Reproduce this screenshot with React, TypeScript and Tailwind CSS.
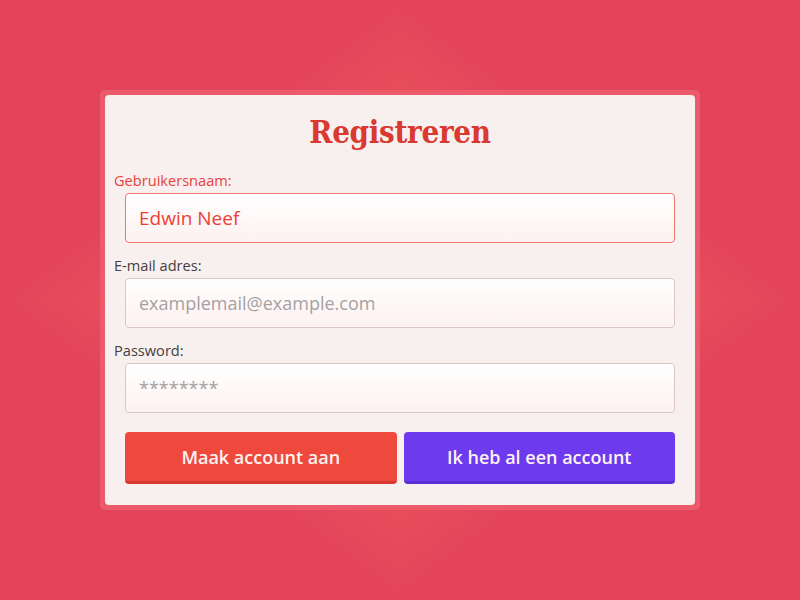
import React from "react";

const sans = "font-['Open_Sans','Noto_Sans',sans-serif]";

function Field({
  label,
  value,
  active,
  placeholder,
}: {
  label: string;
  value?: string;
  active?: boolean;
  placeholder: string;
}) {
  return (
    <div className="flex flex-col">
      <label
        className={`h-5 pl-[9px] text-[14.6px] leading-5 ${sans} ${
          active ? "text-[#ec3f37]" : "text-[#444040]"
        }`}
      >
        {label}
      </label>
      <div className="mt-[3px] px-5">
        <input
          readOnly
          value={value ?? ""}
          placeholder={placeholder}
          className={`h-[50px] w-full rounded-[4px] border bg-[linear-gradient(to_bottom,#ffffff,#fdf1f1)] px-[13px] text-[18px] outline-none placeholder:text-[#a5a1a1] ${sans} ${
            active ? "border-[#ef776f] text-[19px] text-[#ec3f37]" : "border-[#dac6c6] text-[#444]"
          }`}
        />
      </div>
    </div>
  );
}

export default function App() {
  return (
    <div className="flex h-[600px] w-[800px] items-center justify-center bg-[#e3435b] bg-[linear-gradient(to_bottom_right,#e3435b_48%,#f0625a),linear-gradient(to_bottom_left,#e3435b_48%,#f0625a),linear-gradient(to_top_right,#e3435b_48%,#f0625a),linear-gradient(to_top_left,#e3435b_48%,#f0625a)] bg-size-[50%_50%] bg-position-[0_0,100%_0,0_100%,100%_100%] bg-no-repeat">
      <div className="h-[420px] w-[600px] rounded-[5px] bg-[#ec5b6c] p-[5px]">
        <div className="flex h-full w-full flex-col rounded-[4px] bg-[#f8efef]">
          <h1 className="mt-[17px] h-10 text-center font-['DejaVu_Serif',serif] text-[31px] font-bold leading-10 tracking-[-0.3px] text-[#d9392f] [font-stretch:condensed]">
            Registreren
          </h1>
          <div className="mt-[18px] flex flex-col gap-3">
            <Field label="Gebruikersnaam:" value="Edwin Neef" active placeholder="" />
            <Field label="E-mail adres:" placeholder="examplemail@example.com" />
            <Field label="Password:" placeholder="********" />
          </div>
          <div className="mt-[19px] flex gap-[7px] px-5">
            <button
              className={`h-[52px] flex-1 rounded-[4px] border-b-[3px] border-[#d6392f] bg-[#ef483c] pt-[2px] text-[18px] font-semibold text-[#fdf3f3] ${sans}`}
            >
              Maak account aan
            </button>
            <button
              className={`h-[52px] flex-1 rounded-[4px] border-b-[3px] border-[#5b2ed6] bg-[#6e3aee] pt-[2px] text-[18px] font-semibold text-[#fdf3f3] ${sans}`}
            >
              Ik heb al een account
            </button>
          </div>
        </div>
      </div>
    </div>
  );
}
